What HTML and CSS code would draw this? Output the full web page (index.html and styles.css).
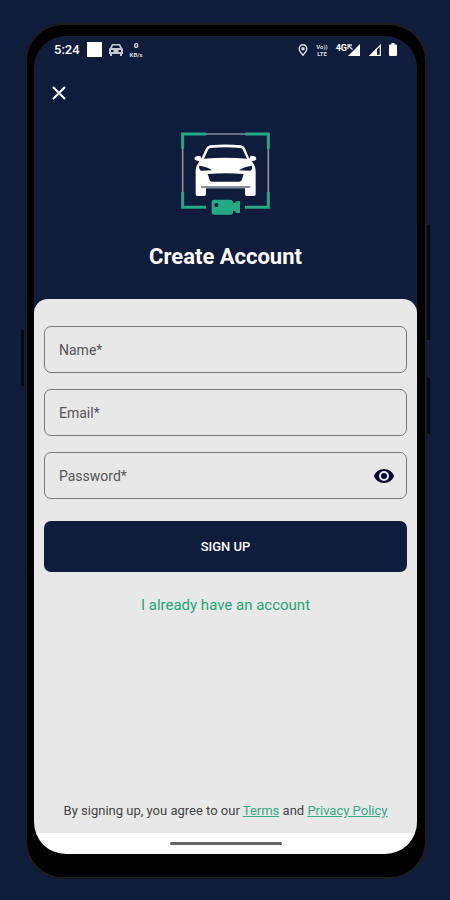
FILE: index.html
```html
<!DOCTYPE html>
<html lang="en">
<head>
  <meta charset="UTF-8">
  <meta name="viewport" content="width=device-width, initial-scale=1.0">
  <title>Create Account</title>
  <link rel="stylesheet" href="styles.css">
</head>
<body>
  <div class="phone">
    <span class="side-key key-left"></span>
    <span class="side-key key-volume"></span>
    <span class="side-key key-power"></span>

    <div class="screen">
      <div class="status-bar">
        <div class="status-left">
          <span class="time">5:24</span>
          <span class="app-square"></span>
          <svg width="14" height="12" viewBox="0 0 14 12" fill="#c3c7d3">
            <path d="M3 0h8l2 4 1 1v5h-1v2h-2v-2H3v2H1v-2H0V5l1-1zM4 1.500 3 4h8l-1-2.500zM2 6v2h2.500V6zM9.500 6v2H12V6z" fill-rule="evenodd"/>
          </svg>
          <span class="net-speed"><b>0</b><span>KB/s</span></span>
        </div>
        <div class="status-right">
          <svg width="10" height="12" viewBox="0 0 10 12">
            <path d="M5 .8C2.700.8 1.200 2.500 1.200 4.600 1.200 7.200 5 11.300 5 11.300s3.800-4.100 3.800-6.700C8.800 2.500 7.300.8 5 .8z" fill="none" stroke="#d8dae2" stroke-width="1.400"/>
            <circle cx="5" cy="4.700" r="1.800" fill="#d8dae2"/>
          </svg>
          <span class="volte"><span>Vo))</span><span>LTE</span></span>
          <span class="signal">
            <span class="net-type">4G</span>
            <svg width="14" height="12" viewBox="0 0 14 12" fill="#fff">
              <path d="M13 0v12H1z"/>
              <path d="M1 5V1h4M1.500 1.500l4 4" fill="none" stroke="#d8dae2" stroke-width="1.300"/>
            </svg>
          </span>
          <svg width="12" height="12" viewBox="0 0 12 12">
            <path d="M11.300 1.500v9.800H1.500z" fill="none" stroke="#fff" stroke-width="1.200"/>
            <path d="M8 4v8H0z" fill="#fff"/>
          </svg>
          <svg width="8" height="13" viewBox="0 0 8 13" fill="#fff">
            <path d="M2.500 0h3v1.500H7q1 0 1 1V12q0 1-1 1H1q-1 0-1-1V2.500q0-1 1-1h1.500z"/>
          </svg>
        </div>
      </div>

      <header class="header">
        <button type="button" class="close" aria-label="Close">
          <svg width="14" height="14" viewBox="0 0 14 14">
            <path d="M1 1l12 12M13 1L1 13" stroke="#fff" stroke-width="2"/>
          </svg>
        </button>
        <!-- car inside a camera frame -->
        <svg class="logo" width="91" height="84" viewBox="120 36 273 252">
          <path d="M128 84v134M385 84v134M196 42h122" fill="none" stroke="#8e8d9f" stroke-width="5"/>
          <path d="M128 86V42h70M316 42h69v44M128 216v46h70M385 216v46h-70" fill="none" stroke="#25a884" stroke-width="9"/>
          <path fill="#fff" fill-rule="evenodd" d="M210 76Q256 71 303 76Q312 78 316 87L328 116L332 107Q350 106 349 118Q344 124 335 123Q347 137 347 154V223Q347 228 341 228H320Q315 228 315 222V205H198V222Q198 228 192 228H172Q167 228 167 222V154Q167 137 179 123Q164 123 163 115Q165 106 181 108L184 116L197 87Q201 78 210 76ZM212 84Q207 84 204 90L192 116Q256 110 321 116L309 90Q306 84 301 84Q256 79 212 84ZM178 137Q176 152 185 152L216 151Q204 140 178 137ZM336 137Q338 152 329 152L297 151Q310 140 336 137ZM203 162L209 181Q210 185 216 185H297Q303 185 305 181L311 162Q257 158 203 162Z"/>
          <path d="M183 201h148" stroke="#0f1c3b" stroke-width="3"/>
          <path d="M222 239h50q7 0 7 6v4l8-1v-4h13v35h-13v-5l-8-2v6q0 6-7 6h-50q-7 0-7-7v-31q0-7 7-7z" fill="#25a884"/>
          <circle cx="229" cy="255" r="6" fill="#0f1c3b"/>
        </svg>
        <h1>Create Account</h1>
      </header>

      <main class="panel">
        <form class="signup">
          <div class="field">
            <label for="name">Name*</label>
            <input type="text" id="name" required>
          </div>
          <div class="field">
            <label for="email">Email*</label>
            <input type="email" id="email" required>
          </div>
          <div class="field">
            <label for="password">Password*</label>
            <input type="password" id="password" required>
            <button type="button" class="show-password" aria-label="Show password">
              <svg width="22" height="16" viewBox="0 0 22 16">
                <path d="M11 1C6 1 2.300 4 1 8c1.300 4 5 7 10 7s8.700-3 10-7c-1.300-4-5-7-10-7z" fill="#0a0d30"/>
                <circle cx="11" cy="8" r="4" fill="none" stroke="#e8e8e8" stroke-width="2"/>
              </svg>
            </button>
          </div>
          <button type="submit" class="submit">SIGN UP</button>
        </form>
        <a href="#" class="login-link">I already have an account</a>
        <p class="terms">By signing up, you agree to our <a href="#">Terms</a> and <a href="#">Privacy Policy</a></p>
      </main>

      <div class="nav-bar"><span></span></div>
    </div>
  </div>
</body>
</html>
```
FILE: styles.css
```css
* {
  box-sizing: border-box;
}
body {
  display: flex;
  min-height: 100vh;
  margin: 0;
  padding: 23px 23px 21px 25px;
  background: #0f1c3b;
  color: #444;
  font-family: Roboto, sans-serif;
}
button {
  padding: 0;
  border: none;
  background: none;
  font-family: inherit;
  cursor: pointer;
}
svg {
  display: block;
  flex-shrink: 0;
}

/* phone */
.phone {
  position: relative;
  display: flex;
  flex: 1;
  padding: 11px 8px 23px 7px;
  border: 2px solid #1c1c1e;
  border-radius: 38px;
  background: #000;
}
.side-key {
  position: absolute;
  width: 3px;
  background: #050914;
}
.key-left {
  top: 305px;
  left: -6px;
  height: 56px;
}
.key-volume {
  top: 200px;
  right: -5px;
  height: 115px;
}
.key-power {
  top: 353px;
  right: -5px;
  height: 56px;
}
.screen {
  display: flex;
  flex: 1;
  flex-direction: column;
  overflow: hidden;
  border-radius: 32px;
  background: #0f1c3b;
}

/* status bar */
.status-bar {
  display: flex;
  justify-content: space-between;
  height: 27px;
  padding: 0 20px;
  color: #fff;
}
.status-left,
.status-right {
  display: flex;
  align-items: center;
}
.status-left {
  gap: 7px;
}
.status-right {
  gap: 8px;
}
.time {
  font-size: 13px;
  font-weight: 500;
}
.app-square {
  width: 15px;
  height: 15px;
  background: #fff;
}
.net-speed,
.volte {
  display: flex;
  flex-direction: column;
  align-items: center;
  color: #d8dae2;
  font-size: 6px;
  font-weight: 700;
  line-height: 7px;
}
.net-speed b {
  font-size: 8px;
  line-height: 10px;
}
.signal {
  display: flex;
}
.net-type {
  font-size: 9px;
  font-weight: 700;
  line-height: 8px;
}

/* header */
.header {
  display: flex;
  flex-direction: column;
  align-items: center;
  padding: 23px 18px 28px;
}
.close {
  align-self: flex-start;
}
.logo {
  margin-top: 32px;
}
h1 {
  margin: 27px 0 0;
  color: #fff;
  font-size: 22px;
  font-weight: 700;
  line-height: 28px;
}

/* form */
.panel {
  display: flex;
  flex: 1;
  flex-direction: column;
  padding: 27px 10px 12px;
  border-radius: 14px 14px 0 0;
  background: #e8e8e8;
}
.signup {
  display: flex;
  flex-direction: column;
  gap: 16px;
}
.field {
  display: flex;
  align-items: center;
  height: 47px;
  padding: 0 11px 0 14px;
  border: 1px solid #77787c;
  border-radius: 7px;
}
.field label {
  color: #555;
  font-size: 14px;
}
.field input {
  flex: 1;
  min-width: 0;
  height: 100%;
  padding: 0 8px;
  border: none;
  outline: none;
  background: none;
  font-size: 14px;
}
.submit {
  height: 51px;
  margin-top: 6px;
  border-radius: 7px;
  background: #0f1c3b;
  color: #fff;
  font-size: 13px;
  font-weight: 500;
}
.login-link {
  align-self: center;
  margin-top: 23px;
  color: #1fa679;
  font-size: 15px;
  line-height: 20px;
  text-decoration: none;
}
.terms {
  margin: auto 0 0;
  font-size: 13px;
  line-height: 20px;
  text-align: center;
}
.terms a {
  color: #35aa85;
}

/* gesture bar */
.nav-bar {
  display: flex;
  align-items: center;
  justify-content: center;
  height: 21px;
  background: #fff;
}
.nav-bar span {
  width: 112px;
  height: 3px;
  border-radius: 2px;
  background: #666;
}
```
